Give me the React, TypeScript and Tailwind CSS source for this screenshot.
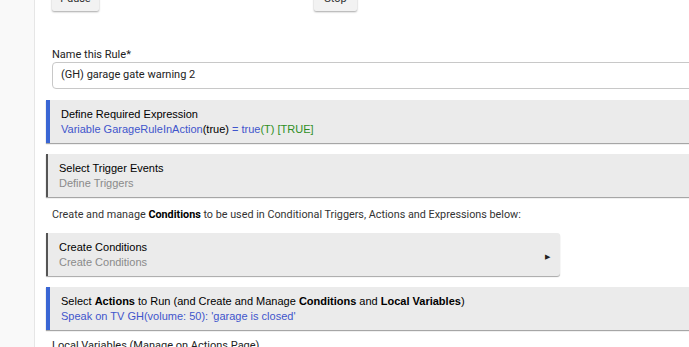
import React from 'react';

const Block: React.FC<{ accent: 'blue' | 'gray'; title: React.ReactNode; sub: React.ReactNode; className?: string; arrow?: boolean }> = ({ accent, title, sub, className = '', arrow }) => (
  <div
    className={`relative bg-[#ebebeb] shadow-[0_1px_1px_rgba(0,0,0,0.35)] pt-[7px] pb-[6px] text-[11px] leading-[15px] font-['Liberation_Sans',Arial,sans-serif] ${
      accent === 'blue' ? 'border-l-4 border-[#3a66d4] pl-[11px]' : 'border-l-2 border-[#555] pl-[11px]'
    } ${className}`}
  >
    <div className="text-black">{title}</div>
    <div>{sub}</div>
    {arrow && <span className="absolute right-[10px] top-[20px] text-[7px] leading-none text-[#222]">▶</span>}
  </div>
);

export default function App() {
  return (
    <div className="flex h-[347px] w-[689px] overflow-hidden bg-white font-['Roboto',sans-serif]">
      <div className="w-[35px] shrink-0 border-r border-[#e6e6e6] bg-[#f9f9f9]" />
      <div className="w-[720px] shrink-0 pl-[11px]">
        <div className="-mt-[13px] flex pl-[6px]">
          <button className="h-[24px] w-[47px] rounded-[2px] bg-[#f2f2f2] text-[11px] text-[#333] shadow-[0_1px_2px_rgba(0,0,0,0.35)]">Pause</button>
          <button className="ml-[215px] h-[24px] w-[43px] rounded-[2px] bg-[#f2f2f2] text-[11px] text-[#333] shadow-[0_1px_2px_rgba(0,0,0,0.35)]">Stop</button>
        </div>

        <div className="mt-[37px] pl-[6px]">
          <div className="text-[11px] leading-[14px] text-[#222]">Name this Rule*</div>
          <div className="flex h-[27px] items-center rounded-[4px] border border-[#c8c8c8] pl-[8px] text-[11px] text-[#222]">
            (GH) garage gate warning 2
          </div>
        </div>

        <Block
          className="mt-[11px]"
          accent="blue"
          title="Define Required Expression"
          sub={
            <>
              <span className="text-[#3f55cc]">Variable GarageRuleInAction</span>
              <span className="text-black">(true)</span>
              <span className="text-[#3f55cc]"> = true</span>
              <span className="text-[#2f8f1f]">(T) [TRUE]</span>
            </>
          }
        />

        <Block
          className="mt-[11px]"
          accent="gray"
          title="Select Trigger Events"
          sub={<span className="text-[#8a8a8a]">Define Triggers</span>}
        />

        <div className="mt-[10px] pl-[6px] text-[10.8px] leading-[15px] text-[#333]">
          Create and manage <b className="font-bold text-black">Conditions</b> to be used in Conditional Triggers, Actions and Expressions below:
        </div>

        <Block
          className="mt-[11px] w-[514px] rounded-r-[3px]"
          accent="gray"
          title="Create Conditions"
          sub={<span className="text-[#8a8a8a]">Create Conditions</span>}
          arrow
        />

        <Block
          className="mt-[11px]"
          accent="blue"
          title={
            <>
              Select <b>Actions</b> to Run (and Create and Manage <b>Conditions</b> and <b>Local Variables</b>)
            </>
          }
          sub={<span className="text-[#3f55cc]">Speak on TV GH(volume: 50): 'garage is closed'</span>}
        />

        <div className="mt-[8px] pl-[6px] text-[11px] leading-[16px] text-[#222]">Local Variables (Manage on Actions Page)</div>
      </div>
    </div>
  );
}
